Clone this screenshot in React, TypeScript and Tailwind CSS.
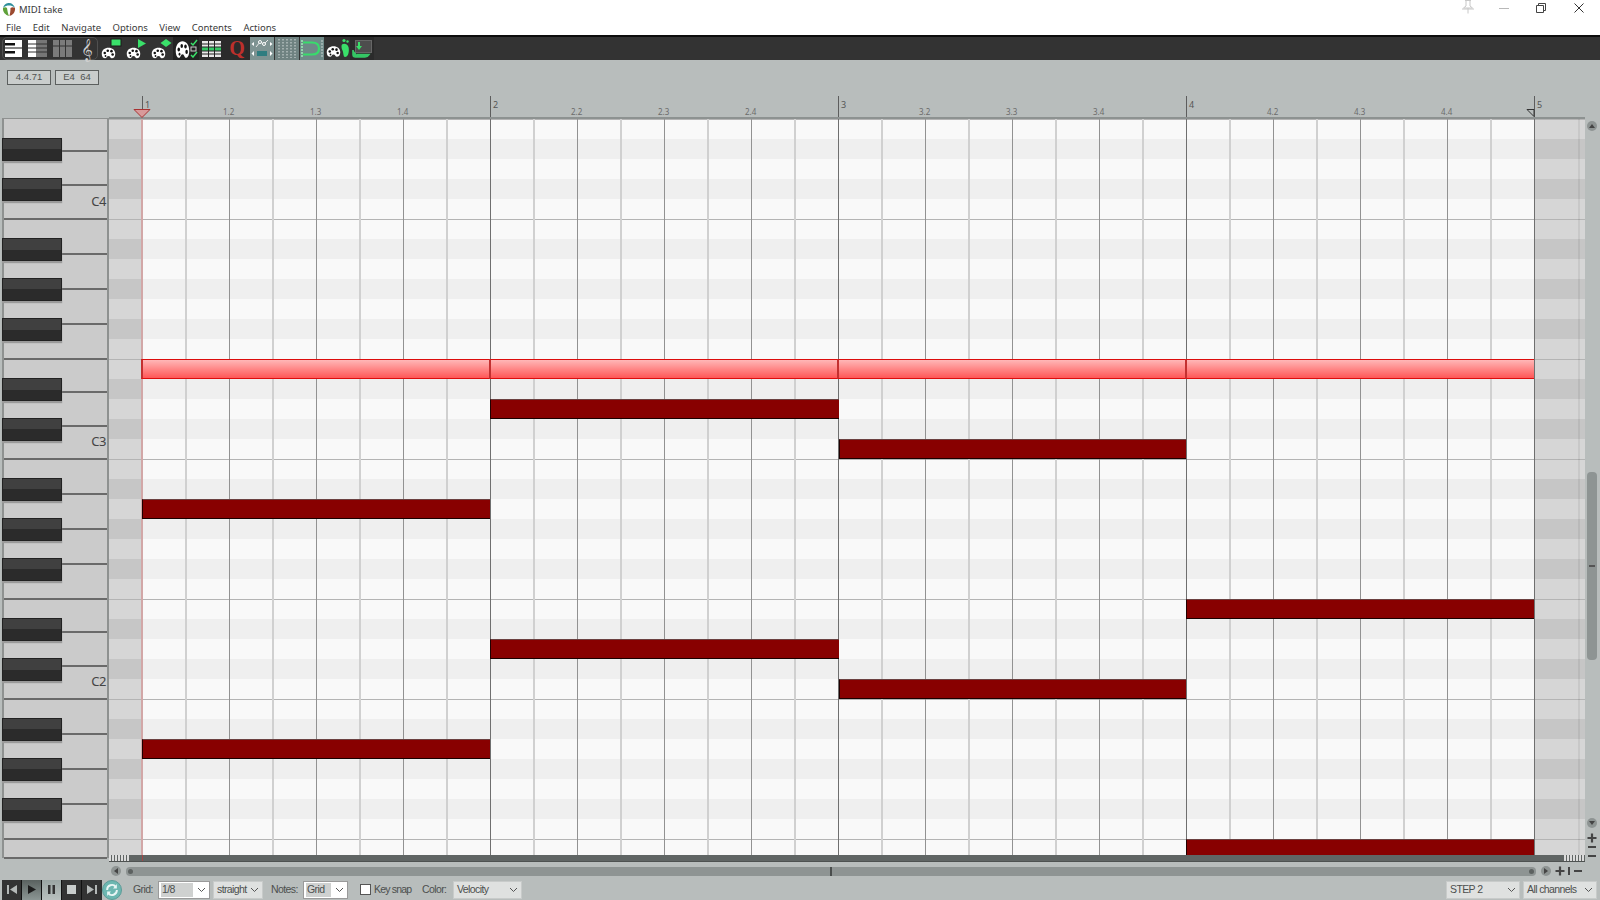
import React from "react";

const ROWS = Array.from({ length: 37 }, (_, i) => i);
const isBlack = (r: number) => [1, 3, 5, 8, 10].includes(((r - 5) % 12 + 12) % 12);
const isLine = (r: number) => [0, 7].includes(((r - 5) % 12 + 12) % 12);

const NOTES = [
  { bar: 1, row: 14 },
  { bar: 2, row: 16 },
  { bar: 0, row: 19 },
  { bar: 3, row: 24 },
  { bar: 1, row: 26 },
  { bar: 2, row: 28 },
  { bar: 0, row: 31 },
  { bar: 3, row: 36 },
];

const KEYS: { h: number; label?: string }[] = [
  { h: 33 }, { h: 34 }, { h: 34, label: "C4" },
  { h: 35 }, { h: 35 }, { h: 35 }, { h: 35 }, { h: 33 }, { h: 34 }, { h: 33, label: "C3" },
  { h: 35 }, { h: 35 }, { h: 35 }, { h: 35 }, { h: 33 }, { h: 34 }, { h: 33, label: "C2" },
  { h: 35 }, { h: 35 }, { h: 35 }, { h: 35 }, { h: 19 },
];

const BEATS = Array.from({ length: 17 }, (_, i) => i);

const PALETTE_PATH =
  "M1 9C1 4 5 1 10 1C15 1 19 4 19 9C19 13 17 15 14.500 15C12.500 15 12.500 12 10 12C7.500 12 7.500 15 5.500 15C3 15 1 13 1 9Z";

function Palette({ className = "", stretch }: { className?: string; stretch?: boolean }) {
  return (
    <svg viewBox="0 0 20 16" className={className} preserveAspectRatio={stretch ? "none" : undefined}>
      <path d={PALETTE_PATH} fill="#fff" />
      <circle cx="5" cy="8" r="1.700" fill="#111" />
      <circle cx="9" cy="5" r="1.700" fill="#111" />
      <circle cx="14" cy="5.500" r="1.700" fill="#111" />
      <circle cx="15.500" cy="10" r="1.700" fill="#111" />
      <circle cx="6" cy="12" r="1.200" fill="#111" />
    </svg>
  );
}

function PianoIcon() {
  return (
    <svg width="17" height="17" viewBox="0 0 17 17">
      <rect x="0" y="0" width="17" height="17" fill="#fff" />
      <rect x="0" y="3" width="10" height="2.500" fill="#111" />
      <rect x="0" y="7.500" width="17" height="1" fill="#111" />
      <rect x="0" y="11" width="10" height="2.500" fill="#111" />
    </svg>
  );
}

function MixIcon() {
  return (
    <svg width="19" height="17" viewBox="0 0 19 17">
      <rect x="0" y="0" width="8" height="17" fill="#fff" />
      <rect x="8" y="0" width="11" height="17" fill="#777" />
      <rect x="0" y="3.500" width="19" height="1" fill="#333" />
      <rect x="0" y="7.500" width="19" height="1" fill="#333" />
      <rect x="0" y="11.500" width="19" height="1" fill="#333" />
    </svg>
  );
}

function GridIcon() {
  return (
    <svg width="19" height="17" viewBox="0 0 19 17">
      <rect x="0" y="0" width="19" height="17" fill="#7b7b7b" />
      <rect x="0" y="5.500" width="19" height="1" fill="#333" />
      <rect x="6" y="0" width="1" height="17" fill="#333" />
      <rect x="12" y="0" width="1" height="17" fill="#333" />
    </svg>
  );
}

function Cell({ w, bg = "", children }: { w: string; bg?: string; children?: React.ReactNode }) {
  return <div className={`relative flex h-[23px] shrink-0 items-center justify-center ${w} ${bg}`}>{children}</div>;
}

function PaletteShape({ shape }: { shape: "rect" | "tri" | "dia" }) {
  return (
    <div className="relative h-[23px] w-[24px]">
      <Palette className="absolute bottom-[0px] left-[2px] h-[14px] w-[15px]" />
      <svg width="14" height="12" viewBox="0 0 14 12" className="absolute right-[0px] top-[1px]">
        {shape === "rect" && <rect x="2" y="1" width="10" height="7" fill="#3ae06a" stroke="#1a1a1a" strokeWidth="1" />}
        {shape === "tri" && <path d="M4 1L12 5.500L4 10Z" fill="#3ae06a" />}
        {shape === "dia" && <path d="M7 1L12.500 5L7 9L1.500 5Z" fill="#3ae06a" />}
      </svg>
    </div>
  );
}

function Toolbar() {
  return (
    <div className="flex h-[25px] items-center border-t-2 border-[#0d0d0d] bg-[#333333] pl-[2px]">
      <div className="flex h-[23px] w-[96px] items-center rounded-[5px] border border-[#505050] pl-[2px]">
        <PianoIcon />
        <div className="ml-[6px]"><MixIcon /></div>
        <div className="ml-[6px]"><GridIcon /></div>
        <div className="ml-[9px] font-['DejaVu_Sans',sans-serif] text-[20px] leading-[22px] text-[#cfcfcf]">𝄞</div>
      </div>
      <Cell w="w-[25px]"><PaletteShape shape="rect" /></Cell>
      <Cell w="w-[25px]"><PaletteShape shape="tri" /></Cell>
      <Cell w="w-[25px]"><PaletteShape shape="dia" /></Cell>
      <Cell w="w-[26px]" bg="bg-[#222222]">
        <Palette stretch className="absolute left-[2px] top-[3px] h-[19px] w-[15px]" />
        <svg width="8" height="19" viewBox="0 0 8 19" className="absolute right-[1px] top-[2px]">
          <path d="M1 4L3 6L7 1" fill="none" stroke="#3ae06a" strokeWidth="1.500" />
          <rect x="1" y="8" width="5" height="4" fill="none" stroke="#ccc" />
          <path d="M1 16L3 18L7 13" fill="none" stroke="#3ae06a" strokeWidth="1.500" />
        </svg>
      </Cell>
      <Cell w="w-[25px]" bg="bg-[#2b2b2b]">
        <svg width="19" height="16" viewBox="0 0 19 16">
          <rect x="0" y="0" width="19" height="16" fill="#e8e8e8" />
          <rect x="0" y="6" width="19" height="4" fill="#35c765" />
          <rect x="0" y="2.500" width="19" height="1" fill="#222" />
          <rect x="0" y="5.500" width="19" height="1" fill="#222" />
          <rect x="0" y="9.500" width="19" height="1" fill="#222" />
          <rect x="0" y="12.500" width="19" height="1" fill="#222" />
          <rect x="6" y="0" width="1" height="16" fill="#222" />
          <rect x="12" y="0" width="1" height="16" fill="#222" />
        </svg>
      </Cell>
      <Cell w="w-[26px]" bg="bg-[#2b2b2b]">
        <span className="font-['Liberation_Serif',serif] text-[20px] font-bold leading-[23px] text-[#bd302c]">Q</span>
      </Cell>
      <Cell w="w-[24px]" bg="bg-[#7e9392]">
        <svg width="22" height="21" viewBox="0 0 22 21">
          <path d="M5 9L9 4L13 6L17 2" fill="none" stroke="#e8e8e8" strokeWidth="1" />
          <circle cx="9" cy="4" r="1.500" fill="#7e9392" stroke="#fff" />
          <circle cx="13" cy="6" r="1.500" fill="#7e9392" stroke="#fff" />
          <path d="M3 4L0.500 6L3 8ZM19 4L21.500 6L19 8ZM3 13L0.500 15.500L3 18ZM19 13L21.500 15.500L19 18Z" fill="#fff" />
          <rect x="6" y="13" width="10" height="5" fill="#2f7d80" />
        </svg>
      </Cell>
      <div className="w-[1px]" />
      <Cell w="w-[24px]" bg="bg-[#6f8281]">
        <svg width="20" height="19" viewBox="0 0 20 19">
          {[2, 6, 10, 14, 18].map((x) => (
            <line key={x} x1={x} x2={x} y1="0" y2="19" stroke="#d6dcdc" strokeWidth="1" strokeDasharray="1.500 1.500" />
          ))}
        </svg>
      </Cell>
      <div className="w-[1px]" />
      <Cell w="w-[24px]" bg="bg-[#6f8a88]">
        <svg width="22" height="19" viewBox="0 0 22 19">
          <line x1="1" x2="1" y1="1" y2="18" stroke="#9ff0b8" strokeWidth="1.500" strokeDasharray="2 1" />
          <path d="M2 3.500H11C15.500 3.500 18 6 18 9.500C18 13 15.500 15.500 11 15.500H2" fill="none" stroke="#38dc6c" strokeWidth="2.200" />
          <line x1="21" x2="21" y1="1" y2="18" stroke="#c9d2d1" strokeWidth="1" strokeDasharray="2 1" />
        </svg>
      </Cell>
      <div className="w-[1px]" />
      <Cell w="w-[25px]">
        <Palette className="absolute bottom-[1px] left-[1px] h-[15px] w-[15px]" />
        <svg width="10" height="21" viewBox="0 0 10 21" className="absolute right-[0px] top-[1px]">
          <path d="M1.500 8C1.500 5 7 4.500 8.500 9C9.500 13 8.500 19 5 19C3 19 3.500 14 2.500 12.500C1.500 11 1.500 9 1.500 8Z" fill="#3ae06a" />
          <circle cx="4" cy="2.500" r="1.600" fill="#3ae06a" />
          <circle cx="7.500" cy="3.500" r="1.200" fill="#3ae06a" />
        </svg>
      </Cell>
      <Cell w="w-[24px]" bg="bg-[#2b2b2b]">
        <svg width="22" height="21" viewBox="0 0 22 21">
          <rect x="4.500" y="2.500" width="16" height="12" fill="#4d4d4d" stroke="#666" />
          <path d="M7 4H9V8H11L8 12L5 8H7Z" fill="#3ae06a" />
          <path d="M2 12V16.500C2 18 3 19 4.500 19H14C16 19 17 18 18 16.500H6" fill="#35c765" stroke="#35c765" strokeWidth="1.600" />
        </svg>
      </Cell>
    </div>
  );
}

function Ruler() {
  return (
    <div className="relative ml-[109px] flex h-[23px] w-[1476px] border-b-2 border-[#8d9291] pl-[33px]">
      {BEATS.map((i) => {
        const bar = i % 4 === 0;
        const barNo = Math.floor(i / 4) + 1;
        return (
          <div key={i} className={`h-[21px] w-[87px] shrink-0 ${bar ? "border-l border-[#5d5d5d]" : ""}`}>
            {bar ? (
              <span className="block pl-[2px] pt-[3px] text-[9px] leading-[11px] text-[#555]">{barNo}</span>
            ) : (
              <span className="-ml-[6px] block pt-[11px] text-[8px] leading-[10px] text-[#6b6b6b]">
                {barNo}.{i % 4 + 1}
              </span>
            )}
          </div>
        );
      })}
      <svg width="18" height="9" viewBox="0 0 18 9" className="absolute bottom-[-1px] left-[24px]">
        <path d="M1 0.500H17L9 8.500Z" fill="#d89a9a" stroke="#a83232" strokeWidth="1" />
      </svg>
      <svg width="9" height="8" viewBox="0 0 9 8" className="absolute bottom-[0px] left-[1417px]">
        <path d="M1 0.500H8V7.500Z" fill="#b8bdbc" stroke="#333" strokeWidth="1" />
      </svg>
    </div>
  );
}

function Piano() {
  return (
    <div className="relative -mt-[1px] ml-[2px] h-[740px] w-[107px] shrink-0 border-x-2 border-t border-[#8e9190] bg-[#cbcbcb]">
      {KEYS.map((k, i) => (
        <div
          key={i}
          style={{ height: k.h }}
          className="relative flex items-end justify-end border-b-2 border-[#6a6a6a] pb-[10px] pr-[1px]"
        >
          {k.label && <span className="text-[13px] leading-[14px] tracking-[-0.5px] text-[#444]">{k.label}</span>}
        </div>
      ))}
      {ROWS.filter(isBlack).map((r) => (
        <div
          key={r}
          style={{ top: r * 20 - 1 }}
          className="absolute left-[-2px] h-[23px] w-[60px] border border-[#222] bg-[linear-gradient(#404040_0_50%,#2b2b2b_50%_100%)] shadow-[0_2px_1px_#9a9a9a]"
        />
      ))}
    </div>
  );
}

function GridArea() {
  return (
    <div className="relative h-[736px] w-[1476px] overflow-hidden">
      {ROWS.map((r) => {
        const b = isBlack(r);
        const line = isLine(r);
        return (
          <div key={r} className={`box-border flex h-[20px] ${line ? "border-t border-[#b4b4b4]" : ""}`}>
            <div className={`w-[33px] ${b ? "bg-[#c6c6c6]" : "bg-[#d6d6d6]"}`} />
            <div className={`w-[1392px] ${b ? "bg-[#efefef]" : "bg-[#f9f9f9]"}`} />
            <div className={`w-[51px] ${b ? "bg-[#c6c6c6]" : "bg-[#d6d6d6]"}`} />
          </div>
        );
      })}
      <div className="absolute inset-y-0 left-[33px] flex w-[1393px] border-r border-[#6f6f6f]">
        {Array.from({ length: 32 }, (_, i) => (
          <div
            key={i}
            className={`w-[43.5px] shrink-0 ${
              i === 0
                ? "border-l border-[#d2a7a7] shadow-[-1px_0_0_#d2a7a7]"
                : i % 8 === 0
                  ? "border-l border-[#6f6f6f]"
                  : i % 2 === 0
                    ? "border-l border-[#929292]"
                    : "border-l border-[#d0d0d0] shadow-[-1px_0_0_#d0d0d0]"
            }`}
          />
        ))}
      </div>
      <div className="absolute inset-y-0 left-[1469px] w-[2px] bg-[#00000010]" />
      {[0, 1, 2, 3].map((bar) => (
        <div
          key={bar}
          style={{ left: bar === 0 ? 32 : 33 + bar * 348 - 1, width: bar === 0 ? 350 : 349, top: 240 }}
          className="absolute h-[20px] border-y border-l-2 border-y-[#dc0d0d] border-l-[#c43030] bg-[linear-gradient(#ffb7b7,#ff5757)]"
        />
      ))}
      {NOTES.map((n) => (
        <div
          key={`${n.bar}-${n.row}`}
          style={{
            left: 33 + n.bar * 348 + (n.bar === 2 ? 1 : 0),
            width: n.bar === 1 ? 349 : n.bar === 2 ? 347 : 348,
            top: n.row * 20,
          }}
          className="absolute h-[20px] border-y border-l border-t-[#6b4040] border-b-[#1a0000] border-l-[#200000] bg-[#880000]"
        />
      ))}
    </div>
  );
}

function Round({ children, className = "" }: { children?: React.ReactNode; className?: string }) {
  return (
    <div className={`flex h-[10px] w-[10px] shrink-0 items-center justify-center rounded-full bg-[#8e9493] ${className}`}>
      {children}
    </div>
  );
}

function Plus() {
  return (
    <svg width="10" height="10" viewBox="0 0 10 10">
      <path d="M0.500 5H9.500M5 0.500V9.500" stroke="#444" strokeWidth="2.200" />
    </svg>
  );
}

function Minus() {
  return <div className="h-[2px] w-[8px] bg-[#444]" />;
}

function VScroll() {
  return (
    <div className="flex w-[14px] flex-col items-center pt-[2px]">
      <Round>
        <svg width="6" height="4" viewBox="0 0 6 4"><path d="M3 0L6 4H0Z" fill="#444" /></svg>
      </Round>
      <div className="mt-[341px] flex h-[188px] w-[10px] items-center justify-center rounded-[4px] bg-[#8e9493]">
        <div className="h-[2px] w-[6px] bg-[#555]" />
      </div>
      <Round className="mt-[158px]">
        <svg width="6" height="4" viewBox="0 0 6 4"><path d="M3 4L6 0H0Z" fill="#444" /></svg>
      </Round>
      <div className="mt-[5px]"><Plus /></div>
      <div className="mt-[3px]"><Minus /></div>
      <div className="mt-[7px]"><Minus /></div>
    </div>
  );
}

function Band() {
  return (
    <div className="relative flex h-[7px] w-[1476px] items-center justify-between border-b border-[#4e5251] bg-[#606564]">
      <div className="h-[6px] w-[21px] bg-[repeating-linear-gradient(90deg,#dcdcdc_0_2px,#606564_2px_3px)]" />
      <div className="h-[6px] w-[21px] bg-[repeating-linear-gradient(90deg,#dcdcdc_0_2px,#606564_2px_3px)]" />
      <div className="absolute inset-y-0 left-[33px] w-[1px] bg-[#a24646]" />
    </div>
  );
}

function HScroll() {
  return (
    <div className="mt-[4px] flex h-[10px] items-center pl-[111px]">
      <Round>
        <svg width="4" height="6" viewBox="0 0 4 6"><path d="M0 3L4 0V6Z" fill="#444" /></svg>
      </Round>
      <div className="ml-[5px] flex h-[9px] w-[1410px] items-center justify-between rounded-[4px] bg-[#8e9493] px-[2px]">
        <div className="h-[5px] w-[5px] rounded-full bg-[#5c6160]" />
        <div className="h-[9px] w-[2px] bg-[#4a4e4d]" />
        <div className="h-[5px] w-[5px] rounded-full bg-[#5c6160]" />
      </div>
      <Round className="ml-[5px]">
        <svg width="4" height="6" viewBox="0 0 4 6"><path d="M4 3L0 0V6Z" fill="#444" /></svg>
      </Round>
      <div className="ml-[4px]"><Plus /></div>
      <div className="ml-[3px] h-[8px] w-[2px] bg-[#444]" />
      <div className="ml-[4px]"><Minus /></div>
    </div>
  );
}

function Chevron() {
  return (
    <svg width="9" height="6" viewBox="0 0 9 6" className="shrink-0">
      <path d="M1 1L4.500 4.500L8 1" fill="none" stroke="#555" strokeWidth="1" />
    </svg>
  );
}

function Combo({ w, text, white, hi, mr }: { w: string; text: string; white?: boolean; hi?: string; mr?: string }) {
  return (
    <div
      className={`flex h-[18px] shrink-0 items-center justify-between pl-[2px] pr-[3px] ${w} ${mr ?? ""} ${
        white ? "border border-[#9a9a9a] bg-white" : "border border-[#c8cbca] bg-[#dfe1e0]"
      }`}
    >
      <span className={`block h-[14px] pl-[1px] leading-[13px] ${hi ?? ""}`}>{text}</span>
      <Chevron />
    </div>
  );
}

function Transport() {
  const btn = "flex h-[20px] w-[20px] items-center justify-center border-r border-[#111]";
  return (
    <div className="mt-[3px] flex h-[21px] items-center pl-[2px] font-['Liberation_Sans',sans-serif] text-[10.500px] tracking-[-0.6px] text-[#4c4f4e]">
      <div className={`${btn} bg-[#333]`}>
        <svg width="10" height="9" viewBox="0 0 10 9"><path d="M0 0H2V9H0ZM10 0V9L3 4.500Z" fill="#b4b8b7" /></svg>
      </div>
      <div className={`${btn} bg-[linear-gradient(#59615f,#8b9694)]`}>
        <svg width="8" height="9" viewBox="0 0 8 9"><path d="M0 0L8 4.500L0 9Z" fill="#1c1c1c" /></svg>
      </div>
      <div className={`${btn} bg-[linear-gradient(#9aa5a3,#b9c1bf)]`}>
        <svg width="7" height="9" viewBox="0 0 7 9"><path d="M0 0H2.500V9H0ZM4.500 0H7V9H4.500Z" fill="#333" /></svg>
      </div>
      <div className={`${btn} bg-[#333]`}>
        <div className="h-[9px] w-[9px] bg-[#c9cdcc]" />
      </div>
      <div className={`${btn} border-r-0 bg-[#333]`}>
        <svg width="10" height="9" viewBox="0 0 10 9"><path d="M10 0H8V9H10ZM0 0V9L7 4.500Z" fill="#b4b8b7" /></svg>
      </div>
      <div className="flex h-[20px] w-[20px] items-center justify-center rounded-full border border-[#5c9c98] bg-[#6db7b1]">
        <svg width="14" height="14" viewBox="0 0 13 13">
          <path d="M2 6.500A4.500 4.500 0 0 1 10 3.500M11 6.500A4.500 4.500 0 0 1 3 9.500" fill="none" stroke="#e8f5f4" strokeWidth="1.800" />
          <path d="M11 1V5H7.500ZM2 12V8H5.500Z" fill="#e8f5f4" />
        </svg>
      </div>
      <span className="ml-[11px] w-[25px]">Grid:</span>
      <Combo w="w-[52px]" text="1/8" white hi="w-[32px] bg-[#cfd1d0]" mr="mr-[3px]" />
      <Combo w="w-[50px]" text="straight" mr="mr-[8px]" />
      <span className="w-[32px]">Notes:</span>
      <Combo w="w-[45px]" text="Grid" white hi="w-[25px] bg-[#cfd1d0]" />
      <div className="ml-[12px] h-[11px] w-[11px] border border-[#555] bg-white" />
      <span className="ml-[3px] w-[48px] tracking-[-0.8px]">Key snap</span>
      <span className="w-[31px]">Color:</span>
      <Combo w="w-[69px]" text="Velocity" />
      <div className="flex-1" />
      <Combo w="w-[74px]" text="STEP 2" mr="mr-[3px]" />
      <Combo w="w-[74px]" text="All channels" mr="mr-[3px]" />
    </div>
  );
}

function WindowButtons() {
  return (
    <div className="flex h-[18px] items-start pr-[16px] pt-[3px]">
      <svg width="14" height="14" viewBox="0 0 14 14" className="-mt-[3px] mr-[24px]">
        <path d="M4 0.500H10M5 0.500V6L2.500 8H11.500L9 6V0.500M7 8V13.500M1 9H13" fill="none" stroke="#c8c8c8" strokeWidth="1" />
      </svg>
      <div className="mr-[27px] mt-[5px] h-[1px] w-[10px] bg-[#b8b8b8]" />
      <svg width="10" height="10" viewBox="0 0 10 10" className="mr-[28px]">
        <path d="M0.500 2.500H7.500V9.500H0.500ZM2.500 2.500V0.500H9.500V7.500H7.500" fill="none" stroke="#444" strokeWidth="1" />
      </svg>
      <svg width="10" height="10" viewBox="0 0 10 10">
        <path d="M0.500 0.500L9.500 9.500M9.500 0.500L0.500 9.500" fill="none" stroke="#333" strokeWidth="1" />
      </svg>
    </div>
  );
}

export default function App() {
  const menu = ["File", "Edit", "Navigate", "Options", "View", "Contents", "Actions"];
  return (
    <div className="flex h-[900px] w-[1600px] flex-col overflow-hidden bg-[#b8bdbc] font-['Noto_Sans',sans-serif]">
      <div className="bg-white text-[9.500px] text-[#3a3a3a]">
        <div className="flex h-[18px] items-center justify-between">
          <div className="flex items-center pl-[2px]">
            <svg width="14" height="15" viewBox="0 0 14 15">
              <path d="M1 6C2 2 5 1 7 1C10 1 12 3 13 6C11 4 9 3.500 7 3.500C5 3.500 3 4 1 6Z" fill="#2f8f9c" />
              <path d="M1 6C2.500 5 4 5 5 6C5.500 9 6 12 7 14C3.500 13 0.500 10 1 6Z" fill="#5fa13a" />
              <path d="M13 6C11.500 5 10 5 8.500 6C8.500 9 8 12 7.500 14C11 13 13.500 10 13 6Z" fill="#9c4a30" />
            </svg>
            <span className="ml-[3px] pt-[1px] leading-[18px]">MIDI take</span>
          </div>
          <WindowButtons />
        </div>
        <div className="flex h-[17px] items-center gap-[11.500px] pl-[6px] pt-[2px] leading-[15px]">
          {menu.map((m) => (
            <span key={m}>{m}</span>
          ))}
        </div>
      </div>
      <Toolbar />
      <div className="flex h-[36px] gap-[4px] pl-[7px] pt-[10px]">
        {["4.4.71", "E4  64"].map((t) => (
          <div
            key={t}
            className="flex h-[15px] w-[44px] items-center justify-center whitespace-pre border border-[#5b5f5e] bg-[#c9cdcc] font-['Liberation_Sans',sans-serif] text-[9.500px] text-[#505352]"
          >
            {t}
          </div>
        ))}
      </div>
      <Ruler />
      <div className="flex h-[743px] items-start">
        <Piano />
        <div className="flex w-[1476px] shrink-0 flex-col">
          <GridArea />
          <Band />
        </div>
        <VScroll />
      </div>
      <HScroll />
      <Transport />
    </div>
  );
}
